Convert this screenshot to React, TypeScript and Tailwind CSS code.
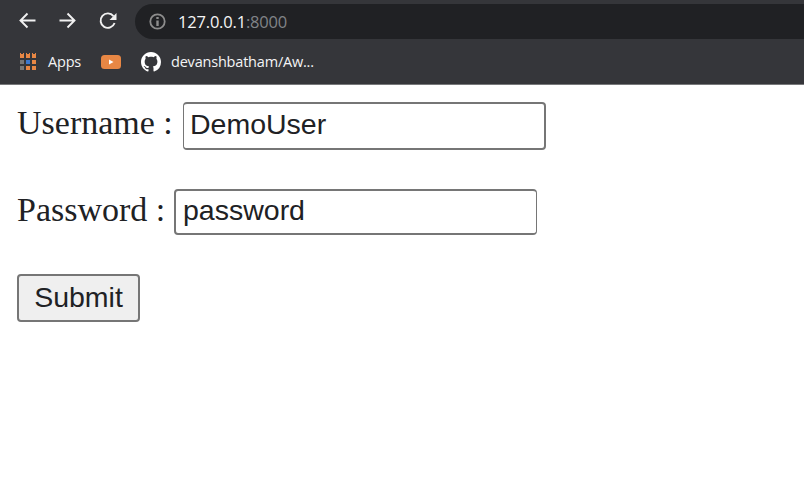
import React from "react";

const serif = "pt-px font-['Liberation_Serif',serif] text-[34px] leading-[40px] text-[#202124]";
const field =
  "block h-full w-[363px] rounded-[4px] border-y-2 border-[#767676] bg-white pb-[4px] font-['Liberation_Sans',sans-serif] text-[28.5px] leading-[32px] text-[#202124] outline-none";

function AppsIcon() {
  const colors = ["#e88744", "#e88744", "#e88744", "#777777", "#3b78cf", "#e88744", "#777777", "#e88744", "#e88744"];
  return (
    <svg width="17" height="18" viewBox="0 0 17 18" shapeRendering="crispEdges">
      {colors.map((c, i) => {
        const x = [0, 6, 12][i % 3];
        const y = [0, 7, 13][Math.floor(i / 3)];
        return i < 3 ? (
          <path key={i} fill={c} d={`M${x} ${y}h1v1h2v-1h1v5h-4z`} />
        ) : (
          <rect key={i} x={x} y={y} width="4" height="4" fill={c} />
        );
      })}
    </svg>
  );
}

export default function App() {
  return (
    <div className="h-[501px] w-[804px] overflow-hidden bg-white">
      <header className="h-[85px] border-b border-[#77787a] bg-[#35363a] font-['Open_Sans',sans-serif]">
        <div className="flex h-[43px] items-start pl-[18px] pt-1">
          <svg width="100" height="35" viewBox="0 0 100 35" fill="none" stroke="#f1f1f1" strokeWidth="1.9">
            <path d="M17.5 16.500H2.500M9.500 9.500L2.500 16.500L9.500 23.500" />
            <path d="M41.500 16.500H56.500M49.500 9.500L56.500 16.500L49.500 23.500" />
            <path d="M95.500 12.200A7.200 7.200 0 1 0 96.600 19" />
            <path d="M98.500 9V16H91.500Z" fill="#f1f1f1" stroke="none" />
          </svg>
          <div className="ml-[17px] flex h-[35px] flex-1 items-center rounded-l-full bg-[#202124] pl-[14px]">
            <svg width="17" height="17" viewBox="0 0 17 17" fill="none" stroke="#8d8d8d">
              <circle cx="8.500" cy="8.500" r="7.200" strokeWidth="1.800" />
              <path d="M8.500 7.500V13M8.500 4V6" strokeWidth="2.400" />
            </svg>
            <span className="ml-[12px] whitespace-nowrap text-[16.5px] leading-6 tracking-[-0.19px] text-[#f5f5f5]">
              127.0.0.1<span className="text-[#808488]">:8000</span>
            </span>
          </div>
        </div>
        <div className="flex h-[38px] items-center pl-[20px] text-[#f3f4f5]">
          <AppsIcon />
          <span className="ml-[11px] w-[35px] whitespace-nowrap text-[14.5px] leading-6 tracking-[-0.2px]">Apps</span>
          <svg className="ml-[18px]" width="20" height="14" viewBox="0 0 20 14">
            <rect width="20" height="14" rx="3.500" fill="#e88744" />
            <path d="M8 4.500L12.500 7L8 9.500Z" fill="white" />
          </svg>
          <svg className="ml-[20px]" width="20" height="20" viewBox="0 0 16 16" fill="white">
            <path d="M8 0C3.580 0 0 3.580 0 8c0 3.540 2.290 6.530 5.470 7.590.4.070.55-.17.55-.38 0-.19-.01-.82-.01-1.490-2.010.37-2.530-.49-2.690-.94-.09-.23-.48-.94-.82-1.130-.28-.15-.68-.52-.01-.53.63-.01 1.080.58 1.230.82.72 1.210 1.870.87 2.330.66.07-.52.28-.87.51-1.070-1.780-.2-3.640-.89-3.640-3.950 0-.87.31-1.590.82-2.150-.08-.2-.36-1.020.08-2.120 0 0 .67-.21 2.200.82.64-.18 1.320-.27 2-.27s1.360.09 2 .27c1.530-1.040 2.200-.82 2.200-.82.44 1.100.16 1.920.08 2.120.51.56.82 1.270.82 2.150 0 3.070-1.870 3.750-3.650 3.950.29.25.54.73.54 1.480 0 1.070-.01 1.930-.01 2.200 0 .21.15.46.55.38A8 8 0 0 0 16 8c0-4.420-3.580-8-8-8" />
          </svg>
          <span className="ml-[10px] whitespace-nowrap text-[14.5px] leading-6 tracking-[-0.2px]">devanshbatham/Aw...</span>
        </div>
      </header>
      <form className="pl-[17px] pt-[17px]" onSubmit={(e) => e.preventDefault()}>
        <div className="flex h-[48px]">
          <label htmlFor="username" className={`${serif} w-[166px] whitespace-pre`}>Username :</label>
          <input id="username" type="text" defaultValue="DemoUser" className={`${field} border-l border-r-2 pl-[6px]`} />
        </div>
        <div className="mt-[39px] flex h-[46px]">
          <label htmlFor="password" className={`${serif} w-[157px] whitespace-pre`}>Password :</label>
          <input id="password" type="text" defaultValue="password" className={`${field} border-l-2 border-r pl-[7px]`} />
        </div>
        <button className="mt-[39px] block h-[48px] w-[123px] rounded-[4px] border-2 border-[#767676] bg-[#efefef] pb-[2px] font-['Liberation_Sans',sans-serif] text-[28.5px] leading-[32px] text-[#202124]">Submit</button>
      </form>
    </div>
  );
}
